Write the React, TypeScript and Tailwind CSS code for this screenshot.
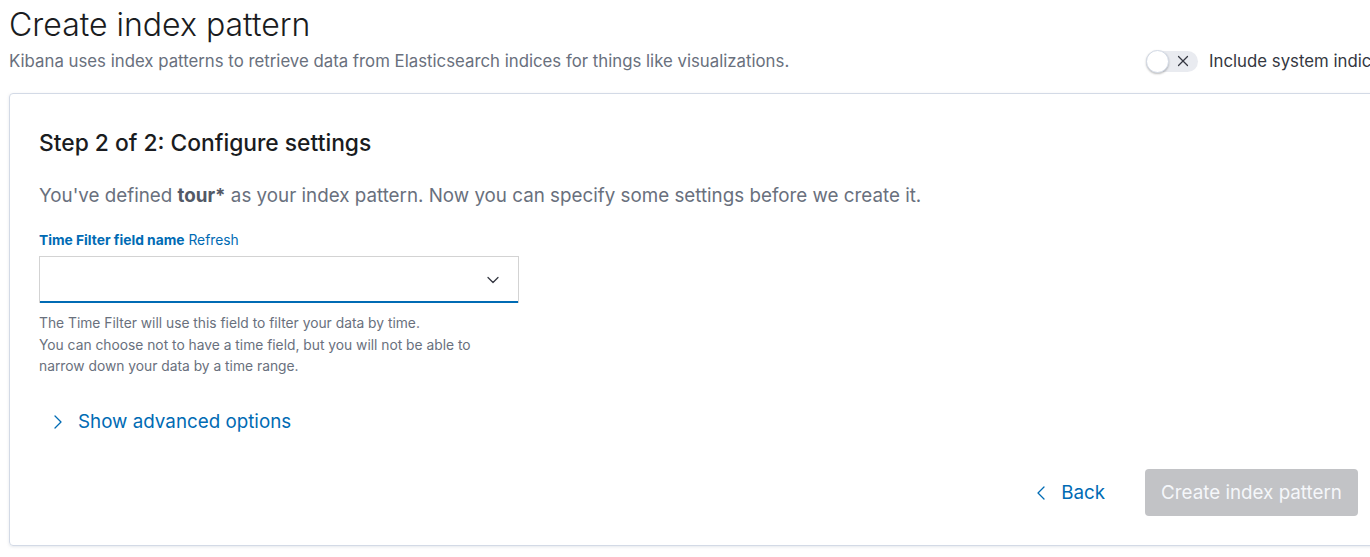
import { ChevronDown, ChevronLeft, ChevronRight, X } from 'lucide-react';

const font = { fontFamily: 'Inter, "Noto Sans", sans-serif' };

function Toggle() {
  return (
    <div className="relative w-[52px] h-[21px] rounded-full bg-[#e9ebf0] shrink-0">
      <div className="absolute left-0 top-[-1px] w-[23px] h-[23px] rounded-full bg-white border border-[#d3dae6] shadow-[0_1px_2px_rgba(0,0,0,0.25)]" />
      <X className="absolute left-[28px] top-[1.5px] text-[#343741]" size={18} strokeWidth={1.6} />
    </div>
  );
}

export default function App() {
  return (
    <div className="w-[1370px] h-[557px] overflow-hidden bg-white" style={font}>
      <div className="w-[1380px] ml-[9px]">
        <div className="flex items-end justify-between">
          <div>
            <h1 className="mt-[5px] text-[32px] leading-[40px] font-light text-[#1a1c21]">Create index pattern</h1>
            <p className="mt-[4px] text-[16.8px] leading-[24px] text-[#69707d]">
              Kibana uses index patterns to retrieve data from Elasticsearch indices for things like visualizations.
            </p>
          </div>
          <div className="flex items-center gap-[11px] mb-0 w-[243px] shrink-0">
            <Toggle />
            <span className="text-[16.8px] leading-[24px] text-[#343741] whitespace-nowrap">Include system indices</span>
          </div>
        </div>

        <div className="mt-[20px] border border-[#d3dae6] rounded-[4px] shadow-[0_1px_3px_rgba(152,162,179,0.25)] pl-[29px] pr-[30px] pt-[33px] pb-[29px]">
          <h2 className="text-[22.8px] leading-[32px] font-medium text-[#1a1c21]">Step 2 of 2: Configure settings</h2>
          <p className="mt-[23px] text-[18.8px] leading-[28px] text-[#69707d]">
            You've defined <strong className="font-bold text-[#535966]">tour*</strong> as your index pattern. Now you can specify some settings before we create it.
          </p>

          <div className="mt-[21px] text-[13.8px] leading-[18px] text-[#006bb4]">
            <span className="font-bold">Time Filter field name</span> <span>Refresh</span>
          </div>
          <div className="mt-[7px] w-[480px] h-[47px] border border-[#d3d3d3] border-b-0 bg-white flex items-center justify-end pr-[15px] shadow-[inset_0_-2px_0_#006bb4]">
            <ChevronDown className="text-[#343741]" size={20} strokeWidth={1.5} />
          </div>
          <div className="mt-[10px] text-[13.8px] leading-[21.5px] text-[#69707d]">
            <p>The Time Filter will use this field to filter your data by time.</p>
            <p>
              You can choose not to have a time field, but you will not be able to
              <br />
              narrow down your data by a time range.
            </p>
          </div>

          <div className="mt-[30px] flex items-center gap-[8px] pl-[7px] text-[#006bb4]">
            <ChevronRight size={24} strokeWidth={1.3} />
            <span className="text-[18.8px] leading-[28px]">Show advanced options</span>
          </div>

          <div className="mt-[33px] flex items-center justify-end gap-[38px]">
            <div className="flex items-center gap-[8px] text-[#006bb4] pt-[2px] mr-[2px]">
              <ChevronLeft size={24} strokeWidth={1.3} />
              <span className="text-[18.8px] leading-[28px]">Back</span>
            </div>
            <button className="h-[47px] w-[213px] rounded-[4px] bg-[#c2c3c6] text-[18.8px] text-[#f5f7fa] pt-[2px]">
              Create index pattern
            </button>
          </div>
        </div>
      </div>
    </div>
  );
}
